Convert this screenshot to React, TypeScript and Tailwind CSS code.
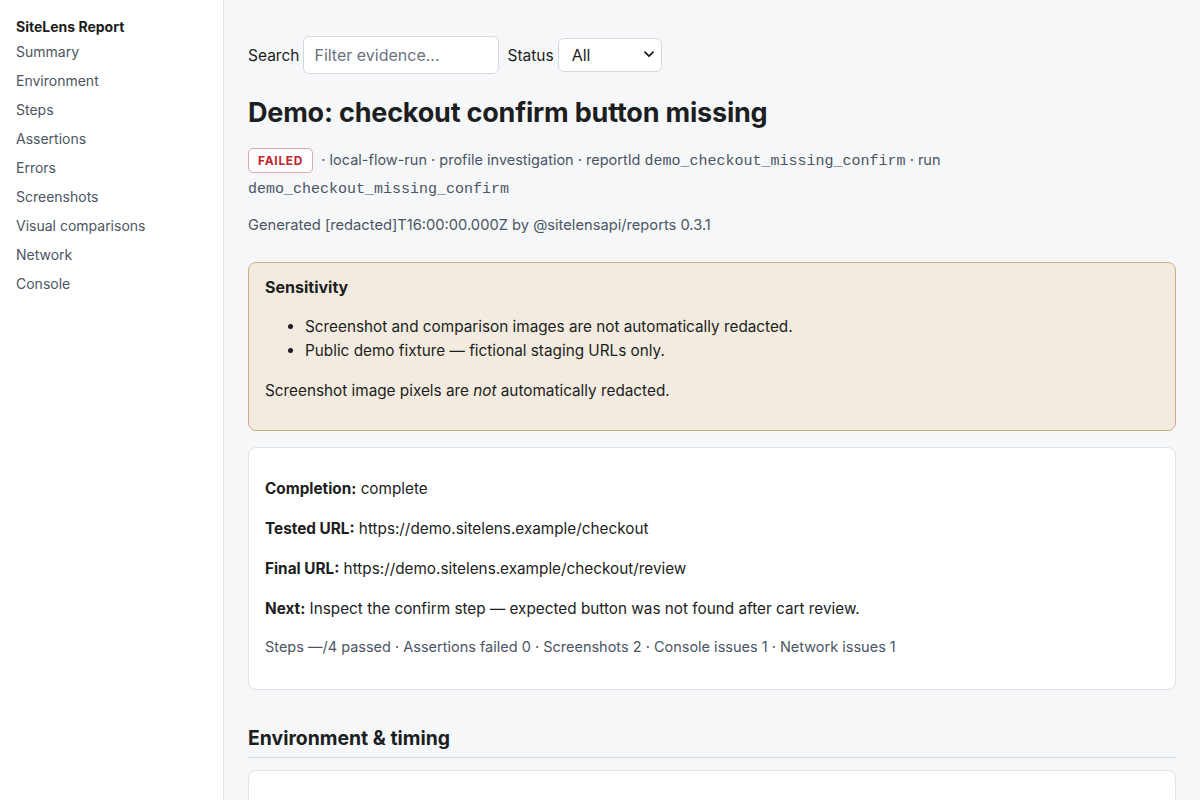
import React from 'react';

const navItems = [
  'Summary',
  'Environment',
  'Steps',
  'Assertions',
  'Errors',
  'Screenshots',
  'Visual comparisons',
  'Network',
  'Console',
];

const mono = "font-['Liberation_Mono','DejaVu_Sans_Mono',monospace]";

export default function App() {
  return (
    <div className="flex min-h-[800px] bg-[#f6f7f9] font-['Inter','Liberation_Sans',sans-serif] text-[#1c1e21]">
      {/* Sidebar */}
      <aside className="w-[224px] shrink-0 border-r border-[#e2e4e8] bg-white px-4 pt-[17px]">
        <div className="text-[14px] font-bold leading-5 text-[#1c1e21]">SiteLens Report</div>
        <nav className="flex flex-col">
          {navItems.map((item) => (
            <a key={item} className="text-[14px] leading-[29px] text-[#4b5563]">
              {item}
            </a>
          ))}
        </nav>
      </aside>

      {/* Main */}
      <main className="flex-1 px-6 pt-9">
        {/* Filters */}
        <div className="flex items-center gap-[4px] text-[15.5px]">
          <label className="pt-[2px]">Search</label>
          <input
            className="h-[38px] w-[196px] rounded-md border border-[#d5d8de] bg-white px-[10px] text-[16px] placeholder:text-[#6b7280] outline-none"
            placeholder="Filter evidence..."
          />
          <label className="ml-[4px] pt-[2px]">Status</label>
          <div className="relative">
            <select className="h-[34px] w-[104px] appearance-none rounded-md border border-[#d5d8de] bg-white pl-[13px] text-[16px] outline-none">
              <option>All</option>
            </select>
            <svg
              className="pointer-events-none absolute right-[8px] top-[13px]"
              width="10"
              height="7"
              viewBox="0 0 10 7"
              fill="none"
            >
              <path d="M1 1.2l4 4 4-4" stroke="#1c1e21" strokeWidth="1.8" strokeLinecap="round" strokeLinejoin="round" />
            </svg>
          </div>
        </div>

        <h1 className="mt-[23px] text-[27px] font-bold leading-8 tracking-[-0.2px]">
          Demo: checkout confirm button missing
        </h1>

        {/* Meta */}
        <div className="mt-[18px] text-[14.5px] leading-[26px] text-[#4b5563]">
          <span className="mr-1 inline-block rounded-[5px] border border-[#e3a5a5] bg-white px-[9px] text-[12px] font-bold leading-[23px] tracking-[0.7px] text-[#c0262d]">
            FAILED
          </span>
          {' '}· local-flow-run · profile investigation · reportId{' '}
          <code className={`${mono} text-[15px] text-[#4b5563]`}>demo_checkout_missing_confirm</code> · run{' '}
          <code className={`${mono} text-[15px] text-[#4b5563]`}>demo_checkout_missing_confirm</code>
        </div>

        <p className="mt-[12px] text-[14.7px] leading-5 text-[#4b5563]">
          Generated [redacted]T16:00:00.000Z by @sitelensapi/reports 0.3.1
        </p>

        {/* Sensitivity */}
        <section className="mt-[27px] rounded-lg border border-[#c6b185] bg-[#f3ebdf] px-4 pt-[12px] pb-[12px] text-[15.3px] leading-6">
          <div className="text-[16px] font-bold">Sensitivity</div>
          <ul className="mt-[16px] list-disc pl-10">
            <li>Screenshot and comparison images are not automatically redacted.</li>
            <li>Public demo fixture — fictional staging URLs only.</li>
          </ul>
          <p className="mt-4 mb-[15px]">
            Screenshot image pixels are <em>not</em> automatically redacted.
          </p>
        </section>

        {/* Summary */}
        <section className="mt-[16px] rounded-lg border border-[#dfe2e7] bg-white px-4 pt-[29px] pb-[32px] text-[15.3px] leading-6">
          <p>
            <strong>Completion:</strong> complete
          </p>
          <p className="mt-4">
            <strong>Tested URL:</strong> https://demo.sitelens.example/checkout
          </p>
          <p className="mt-4">
            <strong>Final URL:</strong> https://demo.sitelens.example/checkout/review
          </p>
          <p className="mt-4">
            <strong>Next:</strong> Inspect the confirm step — expected button was not found after cart review.
          </p>
          <p className="mt-4 text-[14.5px] leading-5 text-[#4b5563]">
            Steps —/4 passed · Assertions failed 0 · Screenshots 2 · Console issues 1 · Network issues 1
          </p>
        </section>

        <h2 className="mt-[34px] border-b border-[#d9dce1] pb-[5px] text-[19.4px] font-bold leading-7">
          Environment &amp; timing
        </h2>
        <section className="mt-3 h-[80px] rounded-lg border border-[#dfe2e7] bg-white" />
      </main>
    </div>
  );
}
